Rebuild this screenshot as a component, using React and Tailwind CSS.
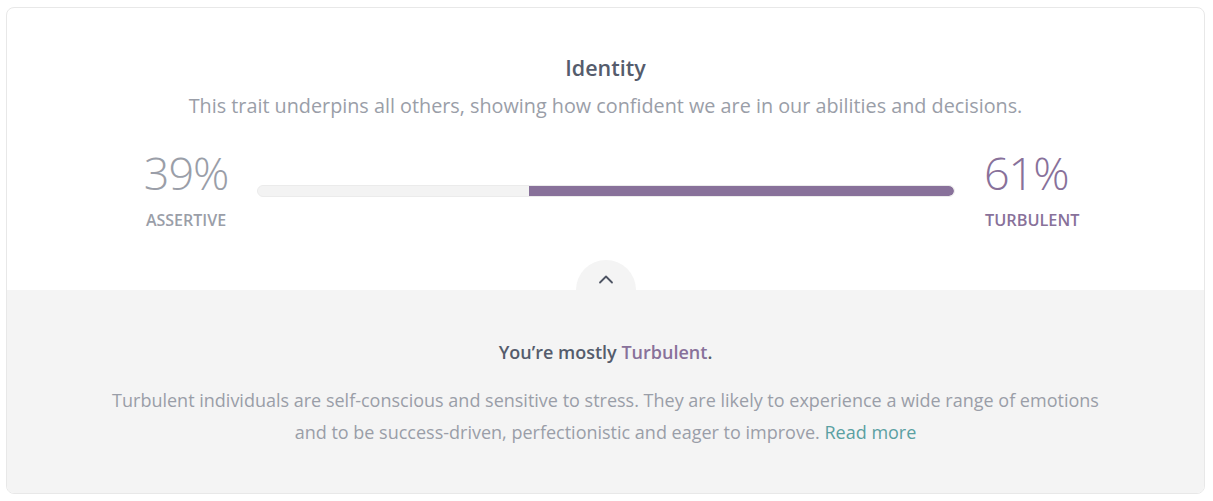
import React from "react";

const TraitBar = ({ left, right, leftLabel, rightLabel }) => {
  return (
    <div className="flex items-start pl-[127px] mt-[25px]">
      <div className="w-[104px] flex flex-col items-center text-[#9a9ea8]">
        <span className="text-[45px] font-light leading-[56px] tracking-tight">{left}%</span>
        <span className="text-[16px] font-semibold uppercase mt-[7px]">{leftLabel}</span>
      </div>
      <div className="ml-[19px] mt-[40px] w-[698px] h-[12px] rounded-full bg-[#f3f3f3] border border-[#ebebeb] flex justify-end overflow-hidden">
        <div className="h-full bg-[#88719a] rounded-r-full" style={{ width: `${right}%` }} />
      </div>
      <div className="ml-[30px] flex flex-col items-start text-[#88719a]">
        <span className="text-[45px] font-light leading-[56px] tracking-tight -ml-[1px]">{right}%</span>
        <span className="text-[16.3px] font-semibold uppercase mt-[7px]">{rightLabel}</span>
      </div>
    </div>
  );
};

const App = () => {
  return (
    <div className="bg-white min-h-screen pt-[7px] pl-[6px]" style={{ fontFamily: '"Open Sans", sans-serif' }}>
      <div className="w-[1199px] h-[487px] border border-[#e8e8e8] rounded-[8px] overflow-hidden flex flex-col">
        <div className="h-[282px] flex flex-col">
          <h2 className="text-center text-[21.5px] font-semibold text-[#555c6c] mt-[45px] leading-[30px]">
            Identity
          </h2>
          <p className="text-center text-[19.8px] text-[#9a9ea8] mt-[9px] leading-[28px]">
            This trait underpins all others, showing how confident we are in our abilities and decisions.
          </p>
          <TraitBar left={39} right={61} leftLabel="Assertive" rightLabel="Turbulent" />
        </div>
        <div className="relative flex-1 bg-[#f4f4f4] flex flex-col items-center">
          <div className="absolute -top-[30px] left-1/2 -translate-x-1/2 w-[60px] h-[60px] rounded-full bg-[#f4f4f4] flex justify-center pt-[14px]">
            <svg width="16" height="10" viewBox="0 0 16 10" fill="none">
              <path d="M2 8.5L8 2.5L14 8.5" stroke="#4e5463" strokeWidth="1.8" strokeLinecap="round" strokeLinejoin="round" />
            </svg>
          </div>
          <p className="relative mt-[49px] text-[18px] font-semibold text-[#555c6c] leading-[26px]">
            You’re mostly <span className="text-[#88719a]">Turbulent</span>.
          </p>
          <p className="mt-[19px] text-[18px] text-[#9a9ea8] leading-[32px] text-center max-w-[1000px]">
            Turbulent individuals are self-conscious and sensitive to stress. They are likely to experience a wide range of emotions
            and to be success-driven, perfectionistic and eager to improve.{" "}
            <a href="#" className="text-[#5aa0a2]">Read more</a>
          </p>
        </div>
      </div>
    </div>
  );
};

export default App;
